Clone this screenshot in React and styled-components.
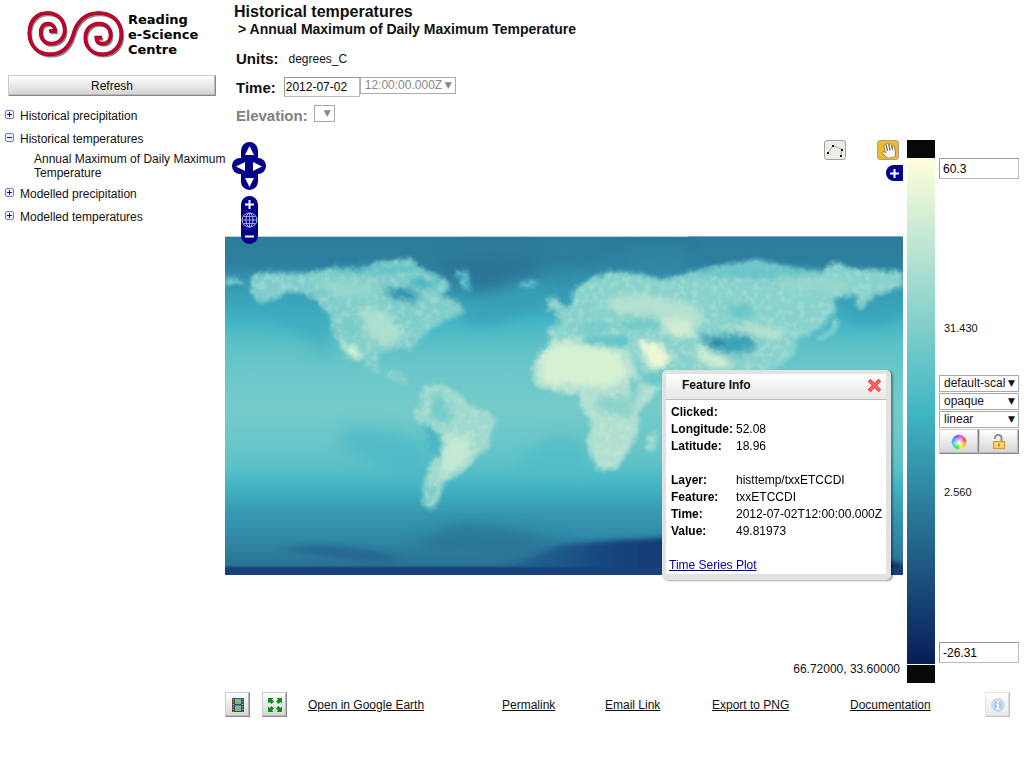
import React from 'react'
import styled, { createGlobalStyle } from 'styled-components'
import { FaHandPaper } from 'react-icons/fa'

const GlobalStyle = createGlobalStyle`
  * {
    box-sizing: border-box;
  }
  body {
    margin: 0;
    background: #fff;
    color: #111;
    font-family: 'Liberation Sans', Arial, sans-serif;
    font-size: 12px;
  }
  button, input, select {
    font: inherit;
    color: inherit;
    margin: 0;
  }
`

const Page = styled.div`
  display: grid;
  grid-template-columns: 225px minmax(0, 1fr);
`

/* sidebar */

const Logo = styled.div`
  display: flex;
  align-items: center;
  padding: 5px 0 0 20px;
  height: 63px;
`

const LogoText = styled.div`
  color: #000;
  font-family: 'DejaVu Sans', sans-serif;
  font-weight: bold;
  font-size: 13px;
  line-height: 15px;
  margin-left: -2px;
`

const RaisedButton = styled.button`
  display: flex;
  align-items: center;
  justify-content: center;
  padding: 0;
  border: 1px solid;
  border-color: #ccc #888 #888 #ccc;
  background: linear-gradient(#fff, #d4d4d4);
  box-shadow: inset -1px -1px 0 #bbb;
  width: ${(p) => p.$width || '25px'};
  height: ${(p) => p.$height || '25px'};
  opacity: ${(p) => (p.disabled ? 0.5 : 1)};
`

const RefreshRow = styled.div`
  padding: 12px 9px 8px 8px;
`

const Tree = styled.ul`
  list-style: none;
  margin: 0;
  padding: 0;
`

const TreeRow = styled.button`
  display: flex;
  align-items: center;
  gap: 6px;
  width: 100%;
  height: 23px;
  border: 0;
  padding: 0 0 0 5px;
  background: none;
  text-align: left;
  svg {
    margin-bottom: 2px;
  }
`

const TreeLeaf = styled.a`
  display: block;
  margin: 2px -8px 2px 34px;
  line-height: 14px;
  color: inherit;
  text-decoration: none;
`

/* header */

const Header = styled.header`
  padding: 3px 0 10px 9px;
`

const Title = styled.h1`
  margin: 0;
  font-size: 16px;
  line-height: 18px;
`

const Subtitle = styled.h2`
  margin: 0 0 6px 4px;
  font-size: 14px;
  line-height: 17px;
`

const Field = styled.div`
  display: flex;
  align-items: center;
  height: ${(p) => p.$height || '29px'};
  padding-left: 2px;
`

const FieldLabel = styled.label`
  font-size: 15px;
  font-weight: bold;
  margin-right: ${(p) => p.$gap};
  color: ${(p) => (p.$muted ? '#808080' : 'inherit')};
`

const TextInput = styled.input`
  width: ${(p) => p.$width};
  height: ${(p) => p.$height};
  border: 1px solid;
  border-color: #999 #bbb #bbb #999;
  padding: 0 ${(p) => p.$pad};
  background: #fff;
  color: #000;
`

const SelectBox = styled.span`
  position: relative;
  display: block;
  color: ${(p) => (p.$muted ? '#888' : '#111')};
  width: ${(p) => p.$width};
  align-self: ${(p) => (p.$muted ? 'flex-start' : 'auto')};
  margin-top: ${(p) => (p.$muted ? '4px' : '0')};
  padding-bottom: 1px;
  &::after {
    content: '▼';
    position: absolute;
    right: 4px;
    top: 2px;
    font-family: 'DejaVu Sans', sans-serif;
    font-size: 9px;
    line-height: 12px;
    pointer-events: none;
  }
  select {
    display: block;
    appearance: none;
    width: 100%;
    height: 17px;
    border: 1px solid #aaa;
    border-radius: 0;
    background: #fff;
    padding: 0 13px 0 4px;
    line-height: 15px;
    opacity: 1;
    color: inherit;
  }
`

/* map */

const Main = styled.main`
  display: grid;
  grid-template-columns: minmax(0, 1fr) 28px 80px;
  column-gap: 4px;
  padding-right: 5px;
`

const MapPane = styled.section`
  position: relative;
  padding: 96px 0 108px;
  svg.map {
    display: block;
    width: 100%;
  }
`

const Controls = styled.div`
  position: absolute;
  left: 7px;
  top: 2px;
  display: flex;
  flex-direction: column;
  align-items: center;
`

const NavButton = styled.button`
  display: flex;
  align-items: center;
  justify-content: center;
  width: 17px;
  height: 16px;
  padding: 0;
  border: 0;
  background: #00008b;
  border-radius: ${(p) => p.$radius || '0'};
`

const PanRow = styled.div`
  display: flex;
`

const ZoomStack = styled.div`
  margin-top: 6px;
  border-radius: 9px;
  overflow: hidden;
`

const Tools = styled.div`
  position: absolute;
  top: 0;
  right: 4px;
  display: flex;
  gap: 31px;
`

const ToolButton = styled.button`
  display: flex;
  align-items: center;
  justify-content: center;
  width: 22px;
  height: 20px;
  padding: 0;
  border: 1px solid #a5a295;
  border-radius: 3px;
  background: ${(p) => (p.$active ? '#f0bb2b' : '#eeece6')};
`

const LayerToggle = styled(NavButton)`
  position: absolute;
  top: 25px;
  right: 0;
`

const Coordinates = styled.div`
  position: absolute;
  right: 3px;
  bottom: 6px;
  line-height: 15px;
`

const Popup = styled.div`
  position: absolute;
  right: 12px;
  top: 230px;
  width: 229px;
  border: 4px solid #e2e2e2;
  border-width: 4px 5px 6px 4px;
  border-radius: 5px;
  background: #fff;
  box-shadow: 2px 1px 2px rgba(0, 0, 0, 0.35);
`

const PopupHeader = styled.div`
  display: flex;
  align-items: center;
  justify-content: space-between;
  height: 26px;
  padding: 0 5px 4px 16px;
  border-bottom: 1px solid #bbb;
  background: linear-gradient(#fff, #e6e6e6);
  font-weight: bold;
`

const CloseButton = styled.button`
  display: flex;
  border: 0;
  padding: 0;
  background: none;
  margin-top: 2px;
`

const InfoTable = styled.table`
  border-collapse: collapse;
  margin: 4px 0 0 5px;
  line-height: 17px;
  color: #000;
  white-space: nowrap;
  th {
    min-width: 65px;
    text-align: left;
  }
  th, td {
    padding: 0;
    height: 17px;
  }
`

const PlotLink = styled.a`
  display: block;
  margin-top: 17px;
  padding: 0 0 0 3px;
  line-height: 17px;
  color: #00a;
`

/* colour scale */

const Scale = styled.div`
  display: flex;
  flex-direction: column;
  gap: 1px;
`

const OutOfRange = styled.div`
  height: 18px;
  background: #080808;
`

const Ramp = styled.div`
  flex: 1;
  background: linear-gradient(#ffffd9, #41b6c4, #081d58);
`

const ScaleControls = styled.div`
  display: flex;
  flex-direction: column;
  justify-content: space-between;
  padding: 18px 0 20px;
`

const ScaleMiddle = styled.div`
  display: flex;
  flex-direction: column;
  gap: 31px;
`

const ScaleOptions = styled.div`
  padding-top: 8px;
`

const ScaleMark = styled.div`
  padding-left: 5px;
  font-size: 11px;
  line-height: 15px;
`

const ButtonPair = styled.div`
  display: flex;
`

const Footer = styled.footer`
  display: grid;
  grid-template-columns: 37px 46px 194fr 103fr 107fr 138fr 135fr 39fr;
  align-items: center;
  padding-top: 9px;
  a {
    color: #111;
    white-space: nowrap;
  }
`

function ToggleIcon({ open }) {
  return (
    <svg width="9" height="9" viewBox="0 0 9 9">
      <rect x=".5" y=".5" width="8" height="8" rx="1.5" fill="#eef2ff" stroke="#6b7fc4" />
      <path d={open ? 'M2 4.5h5' : 'M2 4.5h5M4.500 2v5'} stroke="#0a14b4" />
    </svg>
  )
}

function Spirals() {
  const d =
    'M88 78H105C105 62 94 56 84 56C68 56 62 70 62 82C62 102 74 116 92 116C116 116 134 100 134 76C134 44 112 24 82 24C48 24 28 50 28 84C28 122 54 148 90 148C128 148 150 122 160 88C170 50 196 24 236 24C276 24 304 50 304 88C304 124 280 148 248 148C216 148 196 126 196 98C196 72 214 56 238 56C258 56 272 70 272 90C272 106 262 116 248 116C236 116 229 110 229 98H246'
  return (
    <svg width="110" height="58" viewBox="0 0 330 174" fill="none">
      <path d={d} transform="translate(4 5)" stroke="#888" strokeWidth="9" />
      <path d={d} stroke="#8e0020" strokeWidth="11" />
      <path d={d} stroke="#c4002c" strokeWidth="9" />
    </svg>
  )
}

function Arrow({ turn }) {
  return (
    <svg width="11" height="11" viewBox="0 0 11 11">
      <path d="M5.500 1L10 10H1Z" fill="#fff" transform={`rotate(${turn} 5.500 5.500)`} />
    </svg>
  )
}

function Sign({ plus }) {
  return (
    <svg width="9" height="9" viewBox="0 0 9 9">
      <path d={plus ? 'M0 4.500h9M4.500 0v9' : 'M0 4.500h9'} stroke="#fff" strokeWidth="2" />
    </svg>
  )
}

function Globe() {
  return (
    <svg width="17" height="16" viewBox="0 0 17 16" fill="none" stroke="#b9b9e8">
      <ellipse cx="8.500" cy="8" rx="7.500" ry="7" />
      <ellipse cx="8.500" cy="8" rx="3.500" ry="7" />
      <path d="M8.500 1v14M1 8h15M2.500 4.500h12M2.500 11.500h12" strokeWidth=".8" />
    </svg>
  )
}

function WorldMap() {
  return (
    <svg className="map" viewBox="0 18 2034 1017" role="img" aria-label="Temperature map">
      <defs>
        <linearGradient id="sea" x1="0" y1="18" x2="0" y2="1035" gradientUnits="userSpaceOnUse">
          <stop offset="0" stopColor="#2d7b9b" />
          <stop offset=".08" stopColor="#2d7f9f" />
          <stop offset=".13" stopColor="#3592af" />
          <stop offset=".19" stopColor="#389fb8" />
          <stop offset=".25" stopColor="#43b5c5" />
          <stop offset=".32" stopColor="#5cc1c8" />
          <stop offset=".4" stopColor="#6ac7c9" />
          <stop offset=".5" stopColor="#75cbca" />
          <stop offset=".6" stopColor="#6bc7c9" />
          <stop offset=".68" stopColor="#5bc1c8" />
          <stop offset=".74" stopColor="#42b4c4" />
          <stop offset=".8" stopColor="#389eb6" />
          <stop offset=".88" stopColor="#308ba8" />
          <stop offset=".94" stopColor="#2c7c9b" />
          <stop offset=".97" stopColor="#2a7396" />
          <stop offset=".98" stopColor="#1a4a7e" />
          <stop offset="1" stopColor="#183c75" />
        </linearGradient>
        <linearGradient id="ice" x1="840" y1="0" x2="1480" y2="0" gradientUnits="userSpaceOnUse">
          <stop offset="0" stopColor="#1f5a8a" stopOpacity=".5" />
          <stop offset=".45" stopColor="#194781" />
          <stop offset="1" stopColor="#112c66" />
        </linearGradient>
        <filter id="soft" x="-30%" y="-60%" width="160%" height="220%">
          <feGaussianBlur stdDeviation="22" />
        </filter>
        <filter id="shelf" x="-10%" y="-30%" width="120%" height="160%">
          <feGaussianBlur stdDeviation="18 8" />
        </filter>
        <filter id="floor" x="-10%" y="-100%" width="120%" height="300%">
          <feGaussianBlur stdDeviation="2" />
        </filter>
        <filter id="coast" x="-5%" y="-5%" width="110%" height="110%">
          <feGaussianBlur stdDeviation="6" result="b" />
          <feTurbulence type="fractalNoise" baseFrequency=".05" numOctaves="3" seed="4" result="n" />
          <feDisplacementMap in="b" in2="n" scale="16" xChannelSelector="R" yChannelSelector="G" result="land" />
          <feColorMatrix in="n" type="matrix" values="0 0 0 0 .25  0 0 0 0 .7  0 0 0 0 .77  0 0 4 0 -1.8" result="cool" />
          <feColorMatrix in="n" type="matrix" values="0 0 0 0 .82  0 0 0 0 .93  0 0 0 0 .82  4 0 0 0 -1.9" result="warm" />
          <feMerge result="both">
            <feMergeNode in="cool" />
            <feMergeNode in="warm" />
          </feMerge>
          <feComposite in="both" in2="land" operator="in" result="grain" />
          <feComponentTransfer in="grain" result="faint">
            <feFuncA type="linear" slope=".18" />
          </feComponentTransfer>
          <feMerge>
            <feMergeNode in="land" />
            <feMergeNode in="faint" />
          </feMerge>
        </filter>
        <filter id="patch" x="-20%" y="-20%" width="140%" height="140%">
          <feGaussianBlur stdDeviation="9" result="b" />
          <feTurbulence type="fractalNoise" baseFrequency=".04" numOctaves="3" seed="9" result="n" />
          <feDisplacementMap in="b" in2="n" scale="26" xChannelSelector="R" yChannelSelector="G" />
        </filter>
      </defs>
      <rect y="20" width="2034" height="1015" fill="url(#sea)" />
      <path d="M1389 19H2034" stroke="#6f9fc4" strokeWidth="3" />

      {/* currents and cold water */}
      <g filter="url(#soft)">
        <path d="M0 240Q200 260 310 380L310 250L240 200L0 190Z" fill="#3ba9bd" opacity=".7" />
        <path d="M620 110Q700 60 900 70L960 130Q860 150 800 180Q740 200 670 150Z" fill="#2a7498" />
        <path d="M700 240Q800 230 900 170L990 200Q860 270 740 280Z" fill="#389fb7" />
        <path d="M340 600Q500 580 600 640L620 740Q480 740 340 640Z" fill="#45b6c5" opacity=".6" />
        <path d="M940 640Q1020 580 1080 640L1110 740L860 730Z" fill="#4dbac6" opacity=".6" />
        <path d="M1400 180L1380 60L1240 60L1080 120L900 160L1200 110Z" fill="#318cab" opacity=".5" />
        <path d="M560 960Q640 890 720 880Q900 890 1020 950L900 980Z" fill="#2a7096" opacity=".7" />
        <path d="M1840 230Q1940 190 2034 190V260L1900 290Z" fill="#39a1b8" opacity=".8" />
      </g>
      <g filter="url(#shelf)">
        <path d="M180 955Q300 935 420 960Q540 970 500 1000Q360 990 180 960Z" fill="#235f8c" opacity=".7" />
        <path
          d="M840 1010Q920 985 1000 945Q1150 930 1300 925Q1400 905 1480 925Q1700 970 2034 1000V1050H840Z"
          fill="url(#ice)"
        />
      </g>
      <path d="M-60 1013H2094V1060H-60Z" fill="#183f78" filter="url(#floor)" />

      {/* land */}
      <g filter="url(#coast)" fill="#94d6cd">
        <path
          fill="#80cecb"
          d="M75 140L130 125L230 132L330 112L400 120L460 95L560 85L575 108L620 130L670 155L672 180L640 195L700 215L720 245L690 260L650 278L610 300L580 335L562 350L560 378L548 352L500 360L465 368L460 410L480 430L510 412L548 445L545 472L515 452L480 436L425 412L415 390L385 385L350 345L320 310L315 260L280 215L240 190L200 185L150 205L105 222L90 200L75 180Z"
        />
        <path
          fill="#a0dace"
          d="M590 475L620 465L665 468L700 490L740 530L790 545L815 570L800 600L790 655L755 680L720 715L690 740L655 755L645 800L625 838L595 825L597 760L615 700L645 680L655 640L645 615L610 590L580 580L565 550L590 520Z"
        />
        <path d="M0 140L50 150L60 162L0 166Z" fill="#6cc8c9" />
        <path d="M690 120L730 125L738 185L715 180Z" fill="#4ab4c3" />
        <path d="M880 160L920 150L945 158L910 172Z" fill="#56bfc7" />
        <path d="M955 238L975 230L965 210L990 200L1015 230L1010 240Z" />
        <path
          fill="#88d2cc"
          d="M975 335L965 290L1005 285L990 245L1040 225L1045 180L1095 145L1155 125L1245 130L1305 150L1385 130L1475 110L1595 90L1675 110L1785 125L1830 95L1875 115L2034 125V170L1965 190L1935 205L1910 238L1890 225L1900 195L1825 205L1835 240L1790 290L1760 310L1715 330L1710 370L1675 400L1640 420L1600 520L1330 500L1345 385L1300 400L1260 440L1210 355L1215 320Z"
        />
        <path d="M1840 270L1830 305L1790 330L1775 325L1820 300L1825 265Z" />
        <path
          fill="#b2e0d0"
          d="M980 330L1075 320L1090 345L1155 352L1210 350L1240 430L1265 470L1310 465L1275 510L1240 545L1240 600L1210 665L1175 715L1125 722L1105 690L1087 640L1100 580L1070 530L1065 490L1035 495L975 480L930 465L920 420L930 390L960 360Z"
        />
        <path d="M1265 620L1300 600L1290 660L1265 670Z" />
      </g>

      <g filter="url(#patch)">
        <path d="M340 335L410 365L405 385L380 382Z" fill="#dff4d3" />
        <path d="M400 230L480 240L540 310L500 350L430 330Z" fill="#b5e2d0" opacity=".8" />
        <path d="M340 275Q380 255 410 300L390 320Z" fill="#74cbca" />
        <path d="M260 150L440 160L450 200L340 200Z" fill="#99d8cd" opacity=".7" />
        <path d="M478 178Q540 165 578 190L572 215L500 200Z" fill="#2f8fab" />
        <path d="M560 145L650 160L600 175L560 165Z" fill="#3fafc1" />
        <path d="M330 112L450 108L580 112L560 128L340 126Z" fill="#49b6c4" opacity=".7" />
        <path d="M620 500Q660 480 675 540Q690 590 640 580Q600 560 620 500Z" fill="#6dc8c9" opacity=".8" />
        <path d="M668 615L740 620L735 690L650 750L655 690Z" fill="#c4e8d1" />
        <path d="M590 570L640 620L640 680L615 660Z" fill="#45b4c4" />
        <path d="M600 770L640 770L620 820L600 815Z" fill="#6cc8c9" opacity=".7" />
        <path d="M945 380L1000 335L1180 360L1215 440L1150 470L950 460Z" fill="#d6f0d2" />
        <path d="M1070 325L1090 315L1215 325L1205 345L1160 350L1095 345Z" fill="#6bc8c9" />
        <path d="M1050 275L1100 285L1150 280L1140 300L1080 300ZM1180 275L1300 270L1310 290L1200 295Z" fill="#6bc8c9" />
        <path d="M1230 325L1300 340L1345 385L1320 415L1280 420Z" fill="#edf8d6" />
        <path d="M1130 210L1250 190L1400 220L1440 260L1400 320L1320 310L1300 260L1180 250Z" fill="#b4e1d0" />
        <path d="M1310 270L1390 265L1410 320L1340 320Z" fill="#d0edd2" />
        <path d="M1415 330L1450 370L1520 395L1500 420L1420 390Z" fill="#d3eed2" />
        <path d="M1415 305L1450 320L1580 315L1590 355L1540 370L1475 360L1440 340Z" fill="#3aa0b8" />
        <path d="M1450 332L1495 335L1480 352Z" fill="#1c5e8b" />
        <path d="M1500 290L1580 280L1690 300L1660 330L1570 310Z" fill="#b5e2d0" />
        <path d="M1500 225L1560 225L1600 250L1530 265Z" fill="#66c6c9" />
        <path d="M1120 500L1230 500L1220 560L1110 540Z" fill="#83d0cb" opacity=".8" />
        <path d="M1210 450L1240 440L1240 500L1220 500Z" fill="#6ac7c9" />
        <path d="M1360 130L1600 95L1820 128L1600 150Z" fill="#49b8c5" opacity=".5" />
        <path d="M1650 140L1850 145L1860 190L1700 180Z" fill="#99d8cd" opacity=".7" />
      </g>
    </svg>
  )
}

function Select({ width, muted, value, ...rest }) {
  return (
    <SelectBox $width={width} $muted={muted}>
      <select disabled={muted} {...rest}>
        <option>{value}</option>
      </select>
    </SelectBox>
  )
}

const info = [
  ['Clicked:', ''],
  ['Longitude:', '52.08'],
  ['Latitude:', '18.96'],
  ['', ''],
  ['Layer:', 'histtemp/txxETCCDI'],
  ['Feature:', 'txxETCCDI'],
  ['Time:', '2012-07-02T12:00:00.000Z'],
  ['Value:', '49.81973'],
]

function FeatureInfo() {
  return (
    <Popup role="dialog" aria-label="Feature Info">
      <PopupHeader>
        <span>Feature Info</span>
        <CloseButton aria-label="Close">
          <svg width="13" height="13" viewBox="0 0 13 13">
            <path d="M2.500 2.500l8 8M10.500 2.500l-8 8" stroke="#e03c3c" strokeWidth="3.800" strokeLinecap="square" />
            <path d="M2.500 2.500l8 8M10.500 2.500l-8 8" stroke="#ff6560" strokeWidth="2.200" strokeLinecap="square" />
          </svg>
        </CloseButton>
      </PopupHeader>
      <InfoTable>
        <tbody>
          {info.map(([name, value], i) => (
            <tr key={i}>
              <th scope="row">{name}</th>
              <td>{value}</td>
            </tr>
          ))}
        </tbody>
      </InfoTable>
      <PlotLink href="#plot">Time Series Plot</PlotLink>
    </Popup>
  )
}

const wheel = ['#ff4a4a', '#ffb03a', '#d8f53a', '#4be04b', '#3fe0c8', '#4a9cff', '#7a5cff', '#f04ae0']

function ColourWheel() {
  return (
    <svg width="16" height="16" viewBox="-8 -8 16 16">
      <defs>
        <radialGradient id="shine">
          <stop offset="0" stopColor="#fff" />
          <stop offset="1" stopColor="#fff" stopOpacity="0" />
        </radialGradient>
      </defs>
      {wheel.map((c, i) => (
        <path key={c} d="M0 0L7.300 -.2A7.300 7.300 0 0 1 5.100 5.300Z" fill={c} transform={`rotate(${i * 45 - 45})`} />
      ))}
      <circle r="6" fill="url(#shine)" />
    </svg>
  )
}

function Padlock() {
  return (
    <svg width="14" height="16" viewBox="0 0 14 16">
      <path d="M3 5V4A3.200 3.200 0 0 1 9.500 4V8" fill="none" stroke="#8f8f8f" strokeWidth="2" />
      <rect x="1.500" y="7.500" width="11" height="7" fill="#fbc65c" stroke="#dc9522" />
      <path d="M3 10h8M3 12h8" stroke="#ffe3a0" />
      <path d="M7 9.500v3" stroke="#b87412" strokeWidth="1.500" />
    </svg>
  )
}

function Film() {
  return (
    <svg width="12" height="14" viewBox="0 0 12 14">
      <path d="M0 0h12v14H0z" fill="#4a4a4a" />
      <path d="M3 1h6v5H3zM3 7.500h6v5.500H3z" fill="#6cb6ea" />
      <path d="M3 4l3-1 3 2v1H3zM3 11l3-1.500L9 11v2H3z" fill="#79c143" />
      <path d="M1.300 1v13M10.700 1v13" stroke="#bbb" strokeDasharray="1 1.500" />
    </svg>
  )
}

function Expand() {
  const corner = 'M0 0H5.500L4 1.500L6 3.500L3.500 6L1.500 4L0 5.500Z'
  return (
    <svg width="14" height="14" viewBox="0 0 14 14" fill="#138a13">
      {[0, 90, 180, 270].map((turn) => (
        <path key={turn} d={corner} transform={`rotate(${turn} 7 7)`} />
      ))}
    </svg>
  )
}

function App() {
  return (
    <>
      <GlobalStyle />
      <Page>
        <aside>
          <Logo>
            <Spirals />
            <LogoText>
              Reading
              <br />
              e-Science
              <br />
              Centre
            </LogoText>
          </Logo>
          <RefreshRow>
            <RaisedButton $width="100%" $height="21px">Refresh</RaisedButton>
          </RefreshRow>
          <Tree>
            <li>
              <TreeRow><ToggleIcon />Historical precipitation</TreeRow>
            </li>
            <li>
              <TreeRow><ToggleIcon open />Historical temperatures</TreeRow>
              <TreeLeaf href="#layer">Annual Maximum of Daily Maximum Temperature</TreeLeaf>
            </li>
            <li>
              <TreeRow><ToggleIcon />Modelled precipitation</TreeRow>
            </li>
            <li>
              <TreeRow><ToggleIcon />Modelled temperatures</TreeRow>
            </li>
          </Tree>
        </aside>

        <div>
          <Header>
            <Title>Historical temperatures</Title>
            <Subtitle>&gt; Annual Maximum of Daily Maximum Temperature</Subtitle>
            <Field>
              <FieldLabel as="span" $gap="10px">Units:</FieldLabel>
              <span>degrees_C</span>
            </Field>
            <Field $height="28px">
              <FieldLabel htmlFor="date" $gap="8px">Time:</FieldLabel>
              <TextInput id="date" $width="76px" $height="20px" $pad="1px" defaultValue="2012-07-02" />
              <Select width="96px" muted value="12:00:00.000Z" aria-label="Time of day" />
            </Field>
            <Field>
              <FieldLabel htmlFor="elevation" $gap="6px" $muted>Elevation:</FieldLabel>
              <Select id="elevation" width="21px" muted value="" />
            </Field>
          </Header>

          <Main>
            <MapPane>
              <WorldMap />
              <Controls>
                <NavButton $radius="9px 9px 0 0" aria-label="Pan north"><Arrow turn={0} /></NavButton>
                <PanRow>
                  <NavButton $radius="9px 0 0 9px" aria-label="Pan west"><Arrow turn={270} /></NavButton>
                  <NavButton $radius="0 9px 9px 0" aria-label="Pan east"><Arrow turn={90} /></NavButton>
                </PanRow>
                <NavButton $radius="0 0 9px 9px" aria-label="Pan south"><Arrow turn={180} /></NavButton>
                <ZoomStack>
                  <NavButton aria-label="Zoom in"><Sign plus /></NavButton>
                  <NavButton aria-label="Whole world"><Globe /></NavButton>
                  <NavButton aria-label="Zoom out"><Sign /></NavButton>
                </ZoomStack>
              </Controls>
              <Tools>
                <ToolButton aria-label="Draw transect">
                  <svg width="18" height="16" viewBox="0 0 18 16">
                    <path d="M2 11L7 3.500L16 7.500L14.500 14" fill="none" stroke="#888" strokeWidth=".7" />
                    <path d="M1 10h2v2H1zM6 3h2v2H6zM15 7h2v2h-2zM14 13h2v2h-2z" fill="#111" />
                  </svg>
                </ToolButton>
                <ToolButton $active aria-label="Pan map">
                  <FaHandPaper size={15} color="#fbfaf2" stroke="#6b6040" strokeWidth={24} transform="rotate(-12)" />
                </ToolButton>
              </Tools>
              <LayerToggle $radius="9px 0 0 9px" aria-label="Layers"><Sign plus /></LayerToggle>
              <FeatureInfo />
              <Coordinates>66.72000, 33.60000</Coordinates>
            </MapPane>
            <Scale>
              <OutOfRange />
              <Ramp />
              <OutOfRange />
            </Scale>
            <ScaleControls>
              <TextInput aria-label="Scale maximum" $width="80px" $height="21px" $pad="3px" defaultValue="60.3" />
              <ScaleMiddle>
                <ScaleMark>31.430</ScaleMark>
                <ScaleOptions>
                  <Select width="80px" value="default-scale" aria-label="Style" />
                  <Select width="80px" value="opaque" aria-label="Opacity" />
                  <Select width="80px" value="linear" aria-label="Spacing" />
                  <ButtonPair>
                    <RaisedButton $width="40px" aria-label="Palette"><ColourWheel /></RaisedButton>
                    <RaisedButton $width="40px" aria-label="Unlock scale"><Padlock /></RaisedButton>
                  </ButtonPair>
                </ScaleOptions>
                <ScaleMark>2.560</ScaleMark>
              </ScaleMiddle>
              <TextInput aria-label="Scale minimum" $width="80px" $height="21px" $pad="3px" defaultValue="-26.31" />
            </ScaleControls>
          </Main>

          <Footer>
            <RaisedButton aria-label="Animation"><Film /></RaisedButton>
            <RaisedButton aria-label="Fit to window"><Expand /></RaisedButton>
            <a href="#kml">Open in Google Earth</a>
            <a href="#permalink">Permalink</a>
            <a href="#email">Email Link</a>
            <a href="#png">Export to PNG</a>
            <a href="#docs">Documentation</a>
            <RaisedButton disabled aria-label="Layer information">
              <svg width="14" height="14" viewBox="0 0 14 14">
                <circle cx="7" cy="7" r="6.300" fill="#5f97d6" stroke="#8fb2dc" />
                <circle cx="7" cy="7" r="5" fill="none" stroke="#b9d3f0" />
                <path d="M7 3v2M5.500 6.500H7V10.500M5.500 10.500h3" stroke="#fff" strokeWidth="1.500" fill="none" />
              </svg>
            </RaisedButton>
          </Footer>
        </div>
      </Page>
    </>
  )
}

export default App
